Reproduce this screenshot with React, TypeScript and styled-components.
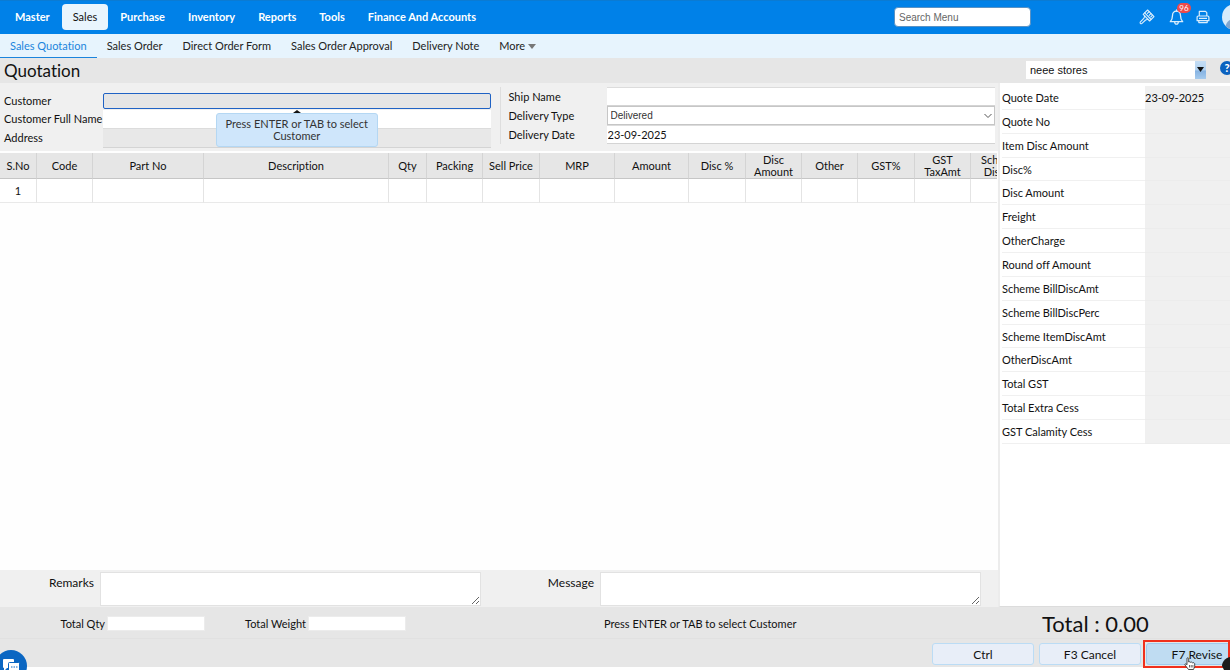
import React from "react";
import styled, { createGlobalStyle } from "styled-components";

const GlobalStyle = createGlobalStyle`
  *, *::before, *::after { box-sizing: border-box; }
  body {
    margin: 0;
    overflow: hidden;
    background: #fefefe;
    color: #111;
    font-family: Lato, "Liberation Sans", sans-serif;
    font-size: 11px;
    font-variant-ligatures: none;
    line-height: 12px;
  }
  button, input, select, textarea {
    margin: 0;
    border-radius: 0;
    color: inherit;
    font: inherit;
    outline: none;
  }
  h1 { margin: 0; }
`;

const Page = styled.div`
  display: flex;
  flex-direction: column;
  min-height: 100vh;
  padding-bottom: 3px;
`;

/* Top bar */

const TopBar = styled.header`
  display: flex;
  align-items: center;
  height: 34px;
  padding-left: 4px;
  padding-bottom: 1px;
  background: #0081e8;
  border-top: 1px solid #0b7bd3;
  overflow: hidden;
`;

const MainNav = styled.nav`
  display: flex;
  align-items: center;
  gap: 1px;
`;

const MainLink = styled.a<{ $active?: boolean }>`
  display: flex;
  align-items: center;
  height: 26px;
  padding: 0 11px;
  border-radius: 4px;
  font-weight: ${(p) => (p.$active ? 400 : 700)};
  color: ${(p) => (p.$active ? "#111" : "#fff")};
  background: ${(p) => (p.$active ? "#e9f5fd" : "transparent")};
  text-decoration: none;
  white-space: nowrap;
`;

const TopTools = styled.div`
  display: flex;
  align-items: center;
  margin-left: auto;
  margin-right: -18px;
`;

const SearchBox = styled.input`
  width: 137px;
  height: 20px;
  margin-right: 108px;
  padding: 0 4px;
  border: 1px solid #5a92c4;
  border-radius: 4px;
  background: #fff;
  font-family: "Liberation Sans", Arial, sans-serif;
  font-size: 10px;
  &::placeholder { color: #666; opacity: 1; }
`;

const ToolButton = styled.button`
  position: relative;
  display: flex;
  width: 16px;
  height: 18px;
  margin-right: 13px;
  padding: 0;
  align-items: center;
  justify-content: center;
  border: 0;
  background: none;
  color: #d9edfc;
`;

const PrintButton = styled(ToolButton)`
  margin-left: -2px;
  margin-right: 11px;
`;

const Badge = styled.span`
  position: absolute;
  top: -5px;
  left: 9px;
  width: 14px;
  height: 10px;
  border-radius: 5px;
  background: #f04a4a;
  color: #fff;
  font-size: 8px;
  line-height: 10px;
  text-align: center;
`;

const Avatar = styled.button`
  width: 26px;
  height: 26px;
  padding: 0;
  border: 0;
  border-radius: 50%;
  overflow: hidden;
  background: #d6ebfb;
`;

/* Second level navigation */

const SubNav = styled.nav`
  display: flex;
  height: 24px;
  background: #e7f4fd;
`;

const SubLink = styled.a<{ $active?: boolean }>`
  display: flex;
  align-items: center;
  gap: 3px;
  padding: 1px 10px 0;
  border-bottom: 1px solid ${(p) => (p.$active ? "#1b84dc" : "transparent")};
  color: ${(p) => (p.$active ? "#1b84dc" : "#222")};
  text-decoration: none;
  white-space: nowrap;
`;

/* Title row */

const TitleBar = styled.div`
  display: flex;
  align-items: center;
  justify-content: space-between;
  height: 25px;
  padding-left: 4px;
  background: #e6e6e6;
  overflow: hidden;
`;

const Title = styled.h1`
  font-size: 17px;
  font-weight: 400;
  line-height: 24px;
`;

const TitleTools = styled.div`
  display: flex;
  align-items: center;
  gap: 14px;
  margin-right: -4px;
`;

const StorePicker = styled.div`
  display: grid;
  grid-template-columns: 1fr 11px;
  width: 180px;
  height: 18px;
  margin-bottom: 2px;
  background: #fff;
`;

const StoreInput = styled.input`
  min-width: 0;
  padding: 0 4px;
  border: 0;
  background: #fff;
  font-family: "Liberation Sans", Arial, sans-serif;
`;

const StoreToggle = styled.button`
  display: flex;
  align-items: center;
  justify-content: center;
  padding: 0;
  border: 0;
  background: linear-gradient(#c4ddf4, #b2d2f0 50%, #86b3e2 55%, #a5caed);
`;

const HelpButton = styled.button`
  width: 14px;
  height: 14px;
  margin-bottom: 5px;
  padding: 0;
  border: 0;
  border-radius: 50%;
  background: #0b62bf;
  color: #fff;
  font-weight: 900;
`;

/* Work area */

const Work = styled.main`
  display: grid;
  grid-template-columns: minmax(0, 1fr) 231px;
  flex: 1;
`;

const LeftPane = styled.section`
  display: flex;
  flex-direction: column;
  min-width: 0;
  border-right: 1px solid #ececec;
`;

const FormArea = styled.form`
  display: grid;
  grid-template-columns: 1fr 1fr;
  height: 68px;
  padding: 4px 3px 0 4px;
  background: #f0f0f0;
`;

const CustomerFields = styled.div`
  display: grid;
  grid-template-columns: 99px minmax(0, 1fr);
  grid-template-rows: 18px 18px 20px;
  align-items: center;
  padding: 5px 9px 0 0;
`;

const ShipFields = styled.div`
  display: grid;
  grid-template-columns: 98px minmax(0, 1fr);
  grid-auto-rows: 19px;
  align-items: center;
  align-self: start;
  padding-left: 8px;
  border-left: 1px solid #dedede;
`;

const FieldLabel = styled.label`
  white-space: nowrap;
`;

const CustomerCell = styled.div`
  position: relative;
  display: flex;
`;

const CustomerInput = styled.input`
  width: 100%;
  height: 16px;
  border: 1px solid #1f62c4;
  border-radius: 2px;
  background: #e5e5e5;
`;

const PlainInput = styled.input<{ $muted?: boolean; $line?: boolean }>`
  width: 100%;
  height: 100%;
  padding: 0 1px;
  border: 0;
  border-bottom: ${(p) => (p.$line ? "1px solid #d4d4d4" : "0")};
  border-top: ${(p) => (p.$line ? "1px solid #dcdcdc" : "0")};
  background: ${(p) => (p.$muted ? "#e8e8e8" : "#fff")};
`;

const TypeWrap = styled.div`
  position: relative;
  height: 100%;
  svg {
    position: absolute;
    top: 7px;
    right: 3px;
    pointer-events: none;
  }
`;

const TypeSelect = styled.select`
  width: 100%;
  height: 100%;
  padding: 0 3px;
  border: 1px solid #c6c6c6;
  background: #fff;
  color: #333;
  font-family: "Liberation Sans", Arial, sans-serif;
  font-size: 10px;
  appearance: none;
`;

const Tooltip = styled.div`
  position: absolute;
  top: 20px;
  left: 50%;
  z-index: 2;
  width: 162px;
  margin-left: -81px;
  padding: 4px 8px;
  border: 1px solid #b4d7f3;
  border-radius: 3px;
  background: #cfe6fb;
  color: #333;
  text-align: center;
  &::before {
    content: "";
    position: absolute;
    top: -4px;
    left: 50%;
    margin-left: -4px;
    border: 4px solid transparent;
    border-top: 0;
    border-bottom: 3px solid #111;
  }
`;

/* Item grid */

const GridScroll = styled.div`
  flex: 1;
  margin-top: 2px;
  margin-right: 1px;
  overflow: hidden;
`;

const ItemTable = styled.table`
  width: 1030px;
  table-layout: fixed;
  border-collapse: separate;
  border-spacing: 0;
  text-align: center;
  th {
    height: 26px;
    padding: 0 2px;
    background: #e6e6e6;
    border-right: 1px solid #d4d4d4;
    border-bottom: 1px solid #c6c6c6;
    font-weight: 400;
  }
  td {
    height: 24px;
    padding: 0;
    background: #fff;
    border-right: 1px solid #e4e4e4;
    border-bottom: 1px solid #e9e9e9;
  }
`;

const NotesRow = styled.div`
  display: grid;
  grid-template-columns: 1fr 1fr;
  column-gap: 2px;
  height: 37px;
  padding-top: 2px;
  background: #f0f0f0;
`;

const Note = styled.div`
  display: grid;
  grid-template-columns: 94px minmax(0, 1fr);
  column-gap: 6px;
  padding-right: 17px;
`;

const NoteLabel = styled.label`
  padding-top: 3px;
  font-size: 12px;
  line-height: 16px;
  text-align: right;
`;

const NoteArea = styled.textarea`
  width: 100%;
  height: 34px;
  border: 1px solid #e2e2e2;
  background: #fff;
  resize: both;
`;

/* Summary panel */

const RightPane = styled.aside`
  padding: 3px 0 0 2px;
  border-bottom: 1px solid #dcdcdc;
  border-left: 1px solid #ececec;
  background: #fff;
  overflow: hidden;
`;

const SummaryTable = styled.table`
  width: 100%;
  height: 358px;
  border-collapse: separate;
  border-spacing: 0;
  text-align: left;
  th {
    width: 143px;
    padding: 1px 0 0;
    border-bottom: 1px solid #f0f0f0;
    font-weight: 400;
  }
  td {
    padding: 1px 0 0;
    border-bottom: 1px solid #ececec;
    background: #f0f0f0;
  }
`;

/* Footer */

const TotalsBar = styled.div`
  display: flex;
  align-items: center;
  height: 32px;
  padding-top: 2px;
  background: #e6e6e6;
  border-bottom: 1px solid #e1e1e1;
`;

const TotalField = styled.div`
  display: grid;
  grid-template-columns: 105px 98px;
  column-gap: 2px;
  align-items: center;
  margin-right: -4px;
  label { text-align: right; }
  input {
    width: 100%;
    height: 15px;
    border: 1px solid #ececec;
    background: #fff;
  }
`;

const StatusText = styled.p`
  flex: 1;
  margin: 0 0 0 202px;
`;

const GrandTotal = styled.output`
  width: 188px;
  font-size: 22px;
  line-height: 28px;
  white-space: nowrap;
`;

const ActionBar = styled.footer`
  display: flex;
  justify-content: flex-end;
  gap: 5px;
  height: 28px;
  padding-top: 4px;
  margin-right: -18px;
  background: #e6e6e6;
`;

const ActionButton = styled.button<{ $hot?: boolean }>`
  position: relative;
  width: 102px;
  height: 22px;
  padding: 1px 0 0;
  border: 1px solid ${(p) => (p.$hot ? "#9fc9ec" : "#bbdcf5")};
  border-radius: 3px;
  background: ${(p) => (p.$hot ? "#bfdcf2" : "#e8eef8")};
  font-size: 12px;
  &::after {
    content: "";
    display: ${(p) => (p.$hot ? "block" : "none")};
    position: absolute;
    top: -4px;
    left: -4px;
    width: 87px;
    height: 28px;
    border: 2px solid #f0301c;
  }
`;

const ChatButton = styled.button`
  position: fixed;
  left: -5px;
  bottom: -12px;
  display: flex;
  width: 32px;
  height: 32px;
  padding: 0;
  align-items: center;
  justify-content: center;
  border: 0;
  border-radius: 50%;
  background: #0a66c2;
`;

const Pointer = styled.svg`
  position: fixed;
  right: 34px;
  bottom: 0;
`;

const CornerShape = styled.svg`
  position: fixed;
  right: 0;
  bottom: 0;
`;

const mainMenu = ["Master", "Sales", "Purchase", "Inventory", "Reports", "Tools", "Finance And Accounts"];

const subMenu = ["Sales Quotation", "Sales Order", "Direct Order Form", "Sales Order Approval", "Delivery Note"];

const columns: { name: string; width: number }[] = [
  { name: "S.No", width: 37 },
  { name: "Code", width: 56 },
  { name: "Part No", width: 111 },
  { name: "Description", width: 185 },
  { name: "Qty", width: 38 },
  { name: "Packing", width: 56 },
  { name: "Sell Price", width: 57 },
  { name: "MRP", width: 75 },
  { name: "Amount", width: 74 },
  { name: "Disc %", width: 57 },
  { name: "Disc Amount", width: 56 },
  { name: "Other", width: 56 },
  { name: "GST%", width: 57 },
  { name: "GST TaxAmt", width: 56 },
  { name: "Scheme Disc %", width: 59 },
];

const summary: [string, string][] = [
  ["Quote Date", "23-09-2025"],
  ["Quote No", ""],
  ["Item Disc Amount", ""],
  ["Disc%", ""],
  ["Disc Amount", ""],
  ["Freight", ""],
  ["OtherCharge", ""],
  ["Round off Amount", ""],
  ["Scheme BillDiscAmt", ""],
  ["Scheme BillDiscPerc", ""],
  ["Scheme ItemDiscAmt", ""],
  ["OtherDiscAmt", ""],
  ["Total GST", ""],
  ["Total Extra Cess", ""],
  ["GST Calamity Cess", ""],
];

const BrushIcon = () => (
  <svg width="16" height="16" viewBox="0 0 16 16" fill="none" stroke="currentColor" strokeWidth="1.1" strokeLinejoin="round" strokeLinecap="round">
    <path d="M8.6 1 15 7.6 10.6 12 4.2 5.4z" />
    <path d="M5.7 3.9 12.1 10.5M10.2 2.6 8.4 4.4M12 4.5l-1.8 1.8M13.6 6.2l-1.8 1.8" />
    <path d="M5.7 6.9 5 9.2 1.2 13.2c-.5.7.6 2 1.5 1.4L6.6 11l2.4-.7" />
  </svg>
);

const BellIcon = () => (
  <svg width="15" height="17" viewBox="0 0 15 17" fill="none" stroke="currentColor" strokeWidth="1.3" strokeLinejoin="round" strokeLinecap="round">
    <path d="M7.5 2.2c-2.6 0-4 1.9-4 4.3 0 3.600-.8 4.800-2.200 6.200h12.400c-1.400-1.400-2.200-2.600-2.200-6.200 0-2.400-1.400-4.300-4-4.300z" />
    <path d="M7.500 1v1.200M5.700 13c.1 2.900 3.500 2.900 3.600 0" />
  </svg>
);

const PrinterIcon = () => (
  <svg width="14" height="14" viewBox="0 0 14 14" fill="none" stroke="currentColor" strokeWidth="1.2" strokeLinejoin="round">
    <path d="M3.300 6V1.400h6.200L10.800 2.700V6" />
    <path d="M2.300 6h9.400c.7 0 1.200.5 1.200 1.200v3.500H1.100V7.200C1.100 6.500 1.600 6 2.300 6z" />
    <path d="M2.800 10.700v1.900h8.400v-1.900M3 8.400h8" />
  </svg>
);

export default function App() {
  return (
    <>
      <GlobalStyle />
      <Page>
        <TopBar>
          <MainNav aria-label="Main">
            {mainMenu.map((item) => (
              <MainLink key={item} href="#" $active={item === "Sales"}>
                {item}
              </MainLink>
            ))}
          </MainNav>
          <TopTools>
            <SearchBox type="text" placeholder="Search Menu" aria-label="Search Menu" />
            <ToolButton aria-label="Theme">
              <BrushIcon />
            </ToolButton>
            <ToolButton aria-label="Notifications">
              <BellIcon />
              <Badge>96</Badge>
            </ToolButton>
            <PrintButton aria-label="Print">
              <PrinterIcon />
            </PrintButton>
            <Avatar aria-label="Account">
              <svg width="26" height="26" viewBox="0 0 26 26">
                <circle cx="13" cy="10" r="5" fill="#7fa6d0" />
                <path d="M3 25c1-8 5-10 10-10s9 2 10 10z" fill="#7fa6d0" />
              </svg>
            </Avatar>
          </TopTools>
        </TopBar>

        <SubNav aria-label="Sales">
          {subMenu.map((item, i) => (
            <SubLink key={item} href="#" $active={i === 0}>
              {item}
            </SubLink>
          ))}
          <SubLink href="#">
            More
            <svg width="8" height="5" viewBox="0 0 8 5">
              <path d="M0 0h8L4 5z" fill="#777" />
            </svg>
          </SubLink>
        </SubNav>

        <TitleBar>
          <Title>Quotation</Title>
          <TitleTools>
            <StorePicker>
              <StoreInput type="text" defaultValue="neee stores" aria-label="Store" />
              <StoreToggle aria-label="Show stores">
                <svg width="7" height="5" viewBox="0 0 7 5">
                  <path d="M0 0h7L3.500 5z" fill="#111" />
                </svg>
              </StoreToggle>
            </StorePicker>
            <HelpButton aria-label="Help">?</HelpButton>
          </TitleTools>
        </TitleBar>

        <Work>
          <LeftPane>
            <FormArea>
              <CustomerFields>
                <FieldLabel htmlFor="customer">Customer</FieldLabel>
                <CustomerCell>
                  <CustomerInput id="customer" type="text" />
                  <Tooltip role="tooltip">Press ENTER or TAB to select Customer</Tooltip>
                </CustomerCell>
                <FieldLabel htmlFor="fullName">Customer Full Name</FieldLabel>
                <PlainInput id="fullName" type="text" />
                <FieldLabel htmlFor="address">Address</FieldLabel>
                <PlainInput id="address" type="text" $muted $line />
              </CustomerFields>
              <ShipFields>
                <FieldLabel htmlFor="shipName">Ship Name</FieldLabel>
                <PlainInput id="shipName" type="text" $line />
                <FieldLabel htmlFor="deliveryType">Delivery Type</FieldLabel>
                <TypeWrap>
                  <TypeSelect id="deliveryType" defaultValue="Delivered">
                    <option>Delivered</option>
                  </TypeSelect>
                  <svg width="8" height="6" viewBox="0 0 8 6" fill="none" stroke="#555">
                    <path d="M.5 1 4 4.500 7.500 1" />
                  </svg>
                </TypeWrap>
                <FieldLabel htmlFor="deliveryDate">Delivery Date</FieldLabel>
                <PlainInput id="deliveryDate" type="text" defaultValue="23-09-2025" $line />
              </ShipFields>
            </FormArea>

            <GridScroll>
              <ItemTable>
                <colgroup>
                  {columns.map((c) => (
                    <col key={c.name} style={{ width: c.width }} />
                  ))}
                </colgroup>
                <thead>
                  <tr>
                    {columns.map((c) => (
                      <th key={c.name} scope="col">
                        {c.name}
                      </th>
                    ))}
                  </tr>
                </thead>
                <tbody>
                  <tr>
                    {columns.map((c, i) => (
                      <td key={c.name}>{i === 0 ? "1" : ""}</td>
                    ))}
                  </tr>
                </tbody>
              </ItemTable>
            </GridScroll>

            <NotesRow>
              <Note>
                <NoteLabel htmlFor="remarks">Remarks</NoteLabel>
                <NoteArea id="remarks" />
              </Note>
              <Note>
                <NoteLabel htmlFor="message">Message</NoteLabel>
                <NoteArea id="message" />
              </Note>
            </NotesRow>
          </LeftPane>

          <RightPane>
            <SummaryTable>
              <tbody>
                {summary.map(([name, value]) => (
                  <tr key={name}>
                    <th scope="row">{name}</th>
                    <td>{value}</td>
                  </tr>
                ))}
              </tbody>
            </SummaryTable>
          </RightPane>
        </Work>

        <TotalsBar>
          <TotalField>
            <label htmlFor="totalQty">Total Qty</label>
            <input id="totalQty" type="text" readOnly />
          </TotalField>
          <TotalField>
            <label htmlFor="totalWeight">Total Weight</label>
            <input id="totalWeight" type="text" readOnly />
          </TotalField>
          <StatusText>Press ENTER or TAB to select Customer</StatusText>
          <GrandTotal>Total : 0.00</GrandTotal>
        </TotalsBar>

        <ActionBar>
          <ActionButton>Ctrl</ActionButton>
          <ActionButton>F3 Cancel</ActionButton>
          <ActionButton $hot>F7 Revise</ActionButton>
        </ActionBar>
      </Page>

      <ChatButton aria-label="Chat">
        <svg width="18" height="18" viewBox="0 0 18 18">
          <path d="M2 2h9a1 1 0 0 1 1 1v7a1 1 0 0 1-1 1H5l-3 3V11a1 1 0 0 1-1-1V3a1 1 0 0 1 1-1z" fill="#fff" />
          <path d="M7.500 5.500h9a1 1 0 0 1 1 1v7a1 1 0 0 1-1 1V17l-3-2.500h-6a1 1 0 0 1-1-1v-7a1 1 0 0 1 1-1z" fill="#fff" stroke="#0a66c2" />
          <path d="M9 10h1.500M11.500 10H13M14 10h1.500" stroke="#0a66c2" />
        </svg>
      </ChatButton>

      <Pointer width="12" height="13" viewBox="0 0 12 13" aria-hidden="true">
        <path
          d="M3 1c.8-.6 1.700 0 1.700.8V5l1-.2.9.5 1.100-.2.8.7 1.300-.1.900.9v3L9.500 12.500H4.500L1 8c-.5-.9.500-1.500 1.200-1L3 7.800z"
          fill="#fff"
          stroke="#222"
          strokeWidth=".8"
        />
        <path d="M5.500 8v2.500M7.200 8v2.500M8.900 8v2.500" stroke="#222" strokeWidth=".7" />
      </Pointer>
      <CornerShape width="8" height="13" viewBox="0 0 8 13" aria-hidden="true">
        <path d="M8 0C3 1 0 5 0 9l2 4h6z" fill="#1c1c1c" />
      </CornerShape>
    </>
  );
}
